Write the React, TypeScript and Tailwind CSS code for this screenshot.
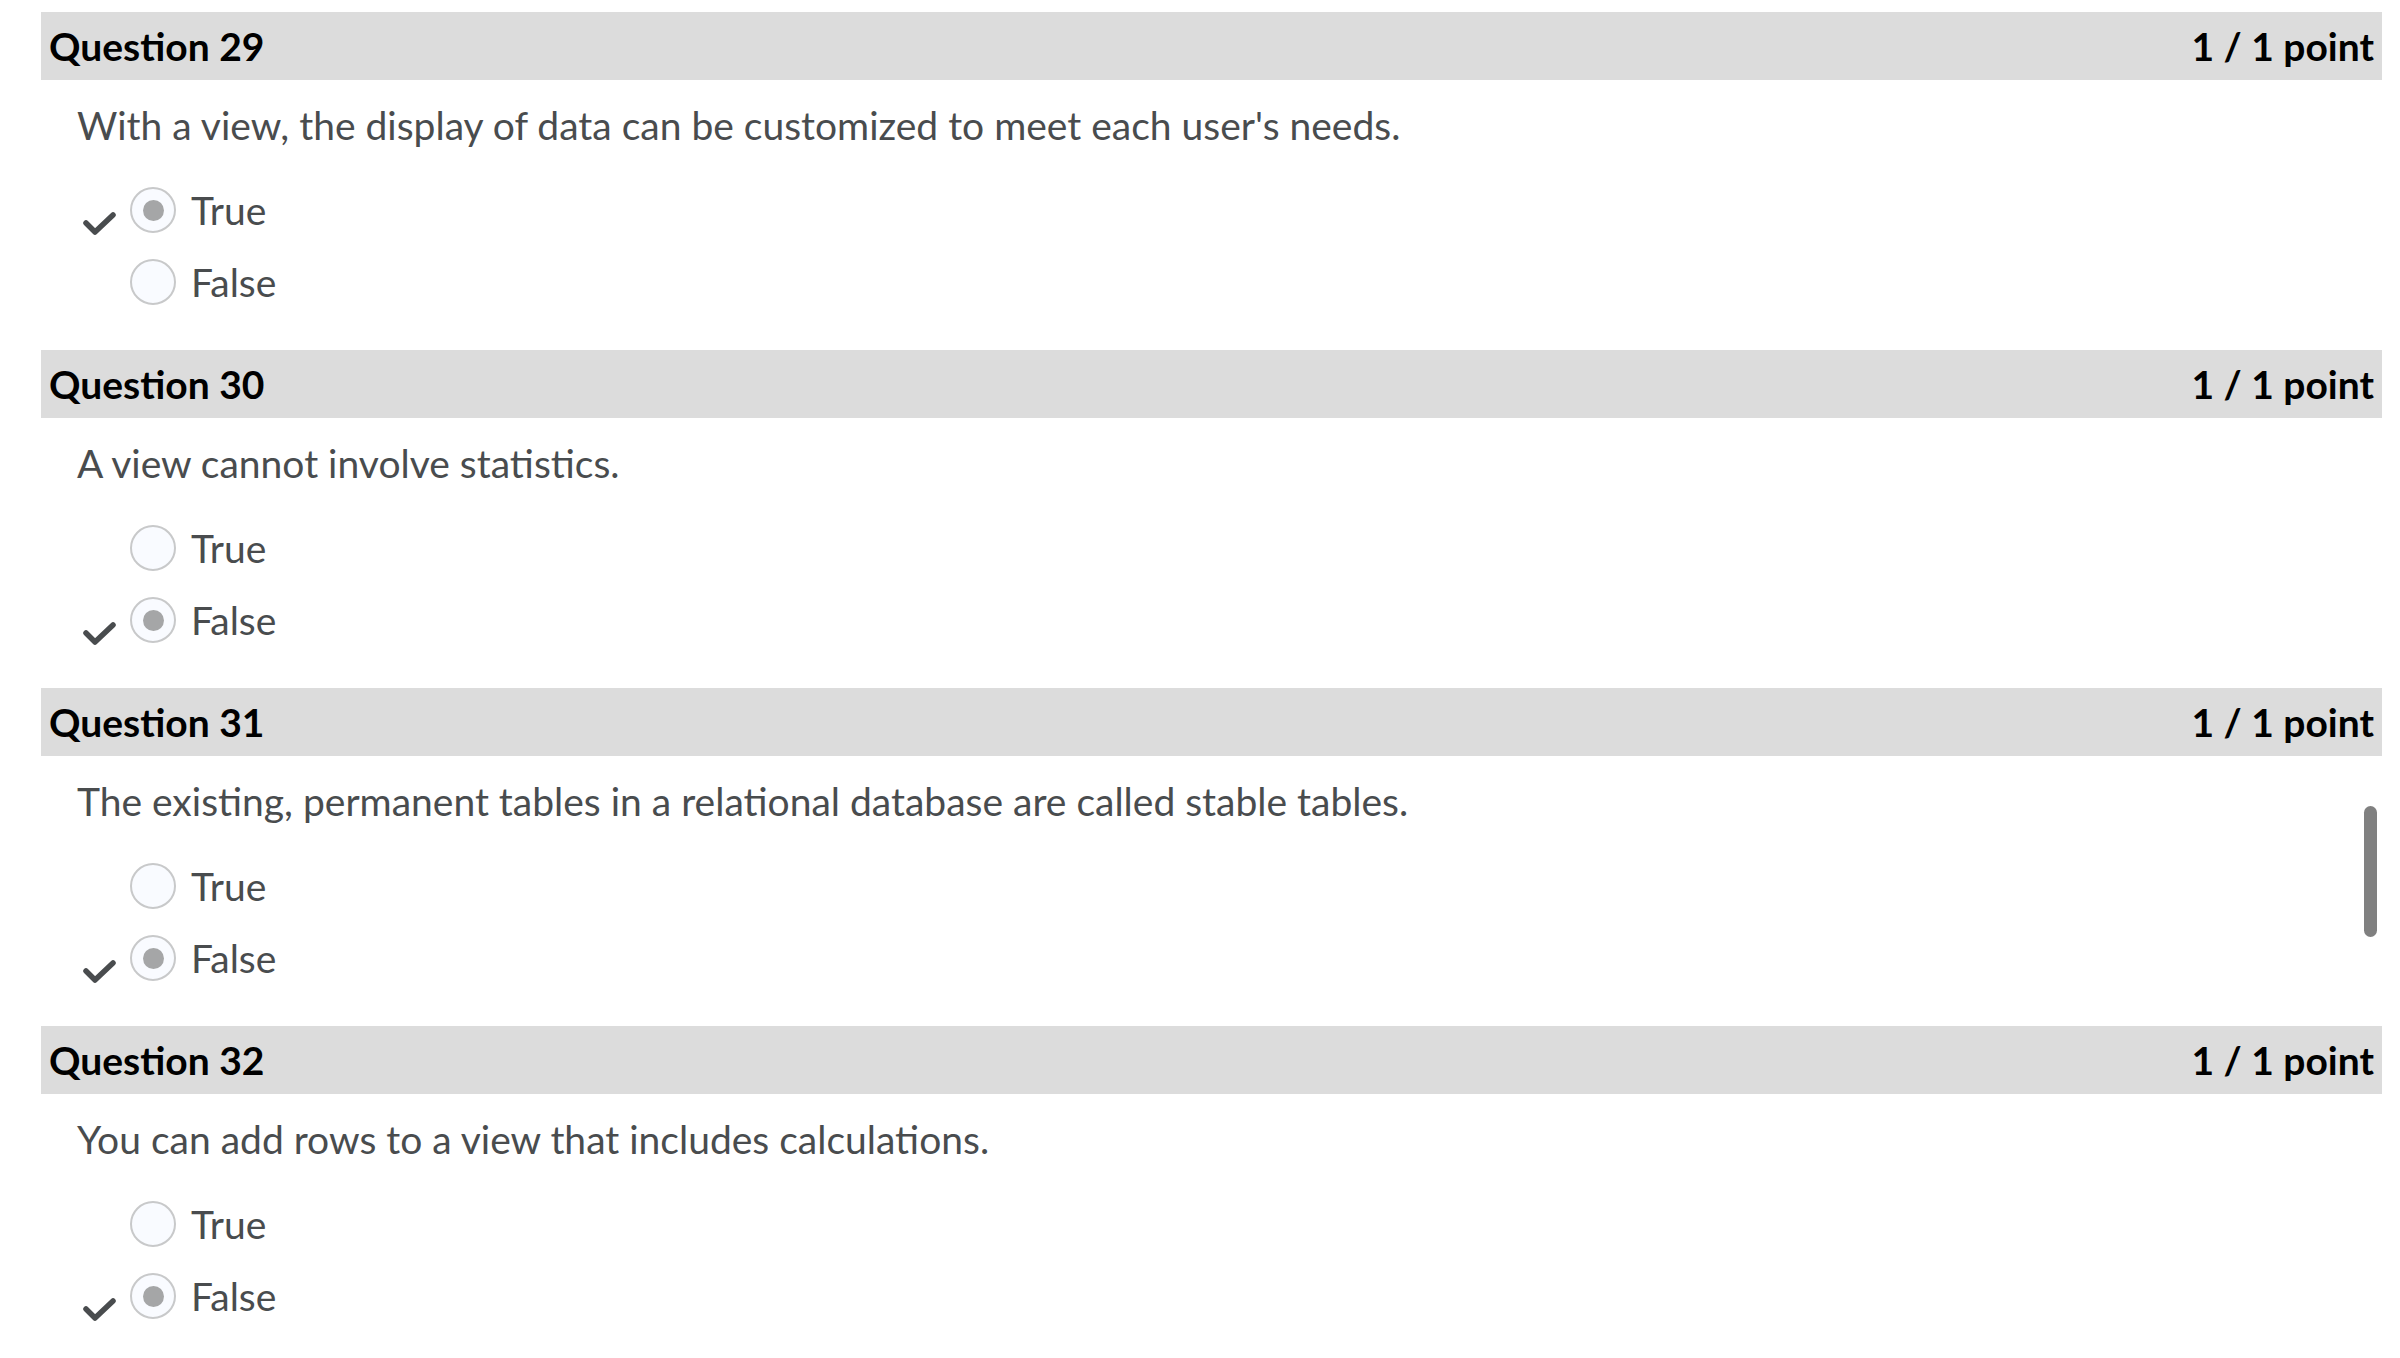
import React from "react";

type Qst = { num: number; text: string; answer: boolean };

const questions: Qst[] = [
  { num: 29, text: "With a view, the display of data can be customized to meet each user's needs.", answer: true },
  { num: 30, text: "A view cannot involve statistics.", answer: false },
  { num: 31, text: "The existing, permanent tables in a relational database are called stable tables.", answer: false },
  { num: 32, text: "You can add rows to a view that includes calculations.", answer: false },
];

function Checkx() {
  return (
    <svg width="34" height="28" viewBox="0 0 34 28" className="mt-[28px]">
      <path d="M4 13 L13 22 L31 5" fill="none" stroke="#494c4e" strokeWidth="5.5" strokeLinecap="round" strokeLinejoin="round" />
    </svg>
  );
}

function Optnrw({ label, picked }: { label: string; picked: boolean }) {
  return (
    <div className="flex h-[72px] items-center pl-[41px]">
      <div className="flex w-[48px] justify-start">{picked ? <Checkx /> : null}</div>
      <div className="flex h-[46px] w-[46px] items-center justify-center rounded-full border-2 border-[#c8c9ca] bg-[#f9fbff]">
        {picked ? <div className="h-[21px] w-[21px] rounded-full bg-[#a5a6a7]" /> : null}
      </div>
      <div className="ml-[15px] text-[39px] leading-none text-[#494c4e]">{label}</div>
    </div>
  );
}

function Qstblk({ q }: { q: Qst }) {
  return (
    <div className="flex flex-col">
      <div className="flex h-[68px] items-center justify-between bg-[#dcdcdc] px-[8px] text-[39px] font-bold text-black">
        <span>Question {q.num}</span>
        <span>1 / 1 point</span>
      </div>
      <div className="mt-[21px] flex h-[48px] items-center pl-[36px] text-[39px] text-[#494c4e]">{q.text}</div>
      <div className="mt-[25px] mb-[32px]">
        <Optnrw label="True" picked={q.answer} />
        <Optnrw label="False" picked={!q.answer} />
      </div>
    </div>
  );
}

export default function App() {
  return (
    <div className="relative h-[1358px] w-[2400px] overflow-hidden bg-white" style={{ fontFamily: "Lato, 'Liberation Sans', sans-serif" }}>
      <div className="flex flex-col pt-[12px] pl-[41px] pr-[18px]">
        {questions.map((q) => (
          <Qstblk key={q.num} q={q} />
        ))}
      </div>
      <div className="absolute top-[806px] left-[2364px] h-[131px] w-[13px] rounded-full bg-[#808080]" />
    </div>
  );
}
